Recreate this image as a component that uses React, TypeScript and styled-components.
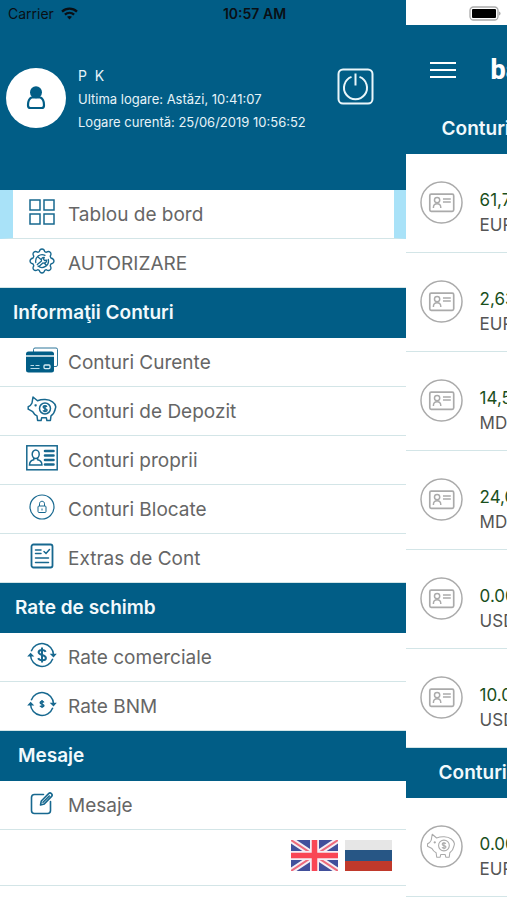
import React from "react";
import styled, { createGlobalStyle, css } from "styled-components";

const blue = "#015d86";
const iconBlue = "#17688f";
const line = "#d3e5e7";

const GlobalStyle = createGlobalStyle`
  *, *::before, *::after { box-sizing: border-box; }
  body { margin: 0; background: #fff; font-family: Inter, "Liberation Sans", sans-serif; }
  button { font: inherit; border: 0; padding: 0; margin: 0; background: none; cursor: pointer; }
  h1, h2, p, ul { margin: 0; padding: 0; }
  ul { list-style: none; }
  svg { display: block; flex: none; }
`;

const Screen = styled.div`
  position: relative;
  display: grid;
  grid-template-columns: 4fr 1fr;
  min-height: 100vh;
  background: #fff;
`;

const StatusBar = styled.div`
  position: absolute;
  inset: 0 0 auto 0;
  z-index: 1;
  display: grid;
  grid-template-columns: 1fr auto 1fr;
  align-items: center;
  height: 27px;
  padding: 0 6px 0 8px;
  font-size: 14px;
  color: #0a0f14;
`;

const Carrier = styled.div`
  display: flex;
  align-items: center;
  gap: 7px;
`;

const Time = styled.time`
  font-weight: 600;
`;

const BatterySlot = styled.div`
  display: flex;
  justify-content: flex-end;
`;

const Drawer = styled.aside`
  min-width: 0;
  background: #fff;
`;

const Profile = styled.header`
  display: flex;
  align-items: center;
  height: 190px;
  padding: 6px 32px 0 6px;
  background: ${blue};
  color: #e6f3f8;
`;

const Avatar = styled.div`
  display: grid;
  place-items: center;
  flex: none;
  width: 60px;
  height: 60px;
  border-radius: 50%;
  background: #fff;
`;

const ProfileText = styled.div`
  flex: 1;
  min-width: 0;
  margin-left: 12px;
  padding-top: 2px;
  white-space: nowrap;
`;

const UserName = styled.p`
  font-size: 14px;
  line-height: 24px;
  white-space: pre;
`;

const LoginInfo = styled.p`
  font-size: 13px;
  line-height: 23px;
`;

const PowerButton = styled.button`
  align-self: center;
  margin-bottom: 24px;
`;

const Section = styled.section``;

const SectionTitle = styled.h2<{ $indent: number }>`
  height: 50px;
  padding-left: ${(p) => p.$indent}px;
  background: ${blue};
  color: #f2f9fc;
  font-size: 19px;
  font-weight: 600;
  line-height: 50px;
  white-space: nowrap;
`;

const MenuButton = styled.button<{ $active?: boolean }>`
  display: flex;
  align-items: center;
  gap: 10px;
  width: 100%;
  height: 49px;
  padding: 0 12px 0 26px;
  border-bottom: 1px solid ${line};
  color: #666;
  font-size: 19px;
  text-align: left;
  ${(p) =>
    p.$active &&
    css`
      padding-left: 13px;
      border-left: 13px solid #a9e2f8;
      border-right: 12px solid #a9e2f8;
    `}
`;

const IconSlot = styled.span`
  display: grid;
  place-items: center;
  width: 32px;
  padding-bottom: 4px;
`;

const Languages = styled.div`
  display: flex;
  justify-content: flex-end;
  align-items: center;
  gap: 7px;
  height: 56px;
  padding: 0 14px 5px 0;
  border-bottom: 1px solid ${line};
`;

const Page = styled.main`
  min-width: 0;
  overflow: hidden;
  padding-top: 25px;
`;

const PageHeader = styled.header`
  display: flex;
  align-items: center;
  gap: 35px;
  height: 79px;
  padding: 10px 0 0 24px;
  background: ${blue};
`;

const Brand = styled.h1`
  color: #fff;
  font-family: Roboto, "Liberation Sans", sans-serif;
  font-size: 27px;
  font-weight: 800;
  line-height: 34px;
`;

const AccountRow = styled.li`
  display: flex;
  align-items: center;
  gap: 17px;
  height: 99px;
  padding: 0 0 2px 14px;
  border-bottom: 1px solid ${line};
`;

const AccountText = styled.div`
  padding-top: 22px;
  font-size: 17px;
  line-height: 25px;
  white-space: nowrap;
`;

const Amount = styled.p`
  color: #1a4f1c;
`;

const Currency = styled.p`
  color: #555;
`;

const Wifi = () => (
  <svg width="17" height="13" viewBox="0 0 17 13" fill="none" stroke="#0a0f14" strokeWidth="2.3" aria-hidden="true">
    <path d="M1 4.6C5.3.6 11.7.6 16 4.6M3.9 7.7c2.7-2.4 6.5-2.4 9.2 0" />
    <path d="M8.5 12.4 6 9.8c1.5-1.2 3.5-1.2 5 0z" fill="#0a0f14" stroke="none" />
  </svg>
);

const Battery = () => (
  <svg width="32" height="15" viewBox="0 0 32 15" aria-hidden="true">
    <rect x="1" y="1" width="28" height="13" rx="3.5" fill="#fff" stroke="#aaa" strokeWidth="1.3" />
    <rect x="3" y="3" width="24" height="9" rx="1" fill="#000" />
    <path d="M30.3 5.5c1.5.6 1.5 3.4 0 4z" fill="#888" />
  </svg>
);

const Person = () => (
  <svg width="20" height="24" viewBox="0 0 20 24" aria-hidden="true">
    <path
      d="M5.5 11.5C2.700 12.800 2 16 2 19.200c0 1.800.8 2.800 2.400 2.800h11.200c1.600 0 2.400-1 2.400-2.800 0-3.200-.7-6.400-3.500-7.700z"
      fill="#fff"
      stroke={blue}
      strokeWidth="2.200"
    />
    <circle cx="10" cy="6.300" r="6" fill={blue} />
  </svg>
);

const Power = () => (
  <svg width="37" height="37" viewBox="0 0 37 37" fill="none" stroke="#eaf6fa" strokeWidth="2" aria-hidden="true">
    <rect x="1.500" y="1.500" width="34" height="34" rx="4.500" />
    <path d="M14.500 8.900a11.500 11.500 0 1 0 8 0M18.500 5.500v12" />
  </svg>
);

const Hamburger = () => (
  <svg width="26" height="18" viewBox="0 0 26 18" stroke="#fff" strokeWidth="2" aria-hidden="true">
    <path d="M0 2h26M0 9h26M0 16h26" />
  </svg>
);

const Grid = () => (
  <svg width="26" height="26" viewBox="0 0 26 26" fill="none" stroke={iconBlue} strokeWidth="1.500" aria-hidden="true">
    <rect x="1" y="1" width="10" height="10" />
    <rect x="15" y="1" width="10" height="10" />
    <rect x="1" y="15" width="10" height="10" />
    <rect x="15" y="15" width="10" height="10" />
  </svg>
);

const Gear = () => (
  <svg width="26" height="26" viewBox="0 0 26 26" fill="none" stroke={iconBlue} strokeWidth="1.300" strokeLinejoin="round" strokeLinecap="round" aria-hidden="true">
    <path d="M10.300 3.600C10.700 1.600 11.600 1 13 1s2.300.6 2.700 2.600l1.600.7c1.800-1.200 2.900-1 3.900 0s1.200 2.100 0 3.900l.7 1.800c2.200.6 3.100 1.400 3.100 3s-.9 2.400-3.100 3l-.7 1.800c1.200 1.800 1 2.900 0 3.900s-2.100 1.200-3.900 0l-1.600.7C15.300 24.400 14.400 25 13 25s-2.300-.6-2.700-2.600l-1.600-.7c-1.800 1.200-2.900 1-3.900 0s-1.200-2.100 0-3.900L4.100 16C1.900 15.400 1 14.600 1 13s.9-2.400 3.100-3l.7-1.800c-1.200-1.800-1-2.900 0-3.900s2.100-1.200 3.900 0z" />
    <path d="M6.800 14.500A6.500 6.500 0 0 1 16 7.300M19.300 11.500A6.500 6.500 0 0 1 9 18.100" />
    <path d="M8.300 16.600l4.200-3.600c-.6-2 .7-3.800 2.800-3.700l-.8 1.900 1.100 1.300 2.100-.3c0 2.200-1.800 3.300-3.800 2.700l-3.700 3.300M9.300 9.300l3 2.500M15.300 15.300l2.300 2.200" />
  </svg>
);

const Cards = () => (
  <svg width="32" height="26" viewBox="0 0 32 26" aria-hidden="true">
    <rect x="7.500" y="1" width="24" height="18.500" rx="1.500" fill="#fff" stroke={iconBlue} strokeWidth=".9" />
    <rect x="0" y="4.500" width="28" height="21" rx="2.500" fill={blue} />
    <path d="M0 9h28" stroke="#fff" strokeWidth="1.400" />
    <path d="M4.500 18.500h3.500M9.500 18.500h4M4.500 21.500h9" stroke="#b9dbe8" strokeWidth="1" />
    <rect x="18" y="18" width="6" height="3.600" rx="1" fill="none" stroke="#d5eaf2" strokeWidth="1.300" />
  </svg>
);

const PiggyShape = () => (
  <>
    <path d="M6 1 10.500 4.800C15 3 21.500 3 25.500 5.800c2 1.400 2.800 2.900 3.200 4.700.1 1-.2 1.800-.5 2.600-.5 3-2 5.200-4.200 6.800l-.6 4.600h-3.500l-.6-2.800h-4.600l-.6 2.800h-3.500l-.6-4.600c-2-1-3.400-2.500-4.300-4.300L1.200 13.200v-2.400C3 10.300 4.200 8.800 5 7z" />
    <circle cx="18" cy="12.500" r="5.500" />
    <path d="M19.900 10.800c-.8-1.500-3.700-1.300-3.700.3 0 1.900 3.900 1.100 3.900 3 0 1.700-3.300 1.700-4.100.2M18 9v7.200" />
    <path d="M7.500 9.300h2.200M8.600 8.200v2.200" />
  </>
);

const Piggy = () => (
  <svg width="30" height="26" viewBox="0 0 30 26" fill="none" stroke={iconBlue} strokeWidth="1.500" strokeLinejoin="round" aria-hidden="true">
    <PiggyShape />
  </svg>
);

const IdCard = () => (
  <svg width="32" height="26" viewBox="0 0 32 26" fill="none" stroke={iconBlue} aria-hidden="true">
    <rect x=".8" y=".8" width="30.400" height="24" strokeWidth="1.500" />
    <path d="M19 6h8.500M19 10.500h8.500M19 15h8.500M19 19.500h8.500" strokeWidth="2.600" strokeLinecap="round" />
    <ellipse cx="9.700" cy="9.300" rx="3.500" ry="4.200" strokeWidth="1.500" />
    <path d="M7.800 13v1.700c-2.800.6-4.300 1.500-4.300 5.300h12.400c0-3.800-1.500-4.700-4.300-5.300V13" strokeWidth="1.500" />
  </svg>
);

const Lock = () => (
  <svg width="26" height="26" viewBox="0 0 26 26" fill="none" stroke={iconBlue} strokeWidth="1.200" aria-hidden="true">
    <circle cx="13" cy="13" r="12" />
    <rect x="9" y="12" width="8" height="6.500" rx="1" strokeWidth="1" />
    <path d="M10.500 12V9.800c0-3.400 5-3.400 5 0V12M13 14.500v2" strokeWidth="1" />
  </svg>
);

const Statement = () => (
  <svg width="24" height="26" viewBox="0 0 24 26" fill="none" stroke={iconBlue} strokeWidth="1.500" strokeLinecap="round" aria-hidden="true">
    <rect x="1.500" y="1.500" width="21" height="23" rx="2" strokeWidth="1.800" />
    <path d="M5.500 7h5.500M5.500 10.500h5.500M5.500 15h13M5.500 19.500h13M14 8.500l2 2 3.500-4" />
  </svg>
);

const Exchange = ({ large }: { large?: boolean }) => (
  <svg width="30" height="26" viewBox="0 0 30 26" fill="none" stroke={iconBlue} strokeWidth="1.500" aria-hidden="true">
    <path d="M4.200 9.200a11.500 11.500 0 0 1 22.300 3.500M25.800 16.800a11.500 11.500 0 0 1-22.300-3.500" />
    <path d="M.2 14.500 3.600 10.800 7.300 14.500zM22.700 11.800l3.800 3.600L29.800 11.800z" fill={iconBlue} stroke="none" />
    {large ? (
      <path d="M18.600 9.800c-1-2.700-7-2.500-7 .5 0 3.300 7.300 2.100 7.300 5.600 0 3-6.500 3.200-7.700.2M15 5.500v15" strokeWidth="2" />
    ) : (
      <path d="M16.800 11.600c-.5-1.400-3.600-1.300-3.600.2 0 1.700 3.700 1 3.700 2.800 0 1.500-3.300 1.500-3.900.1M15 9v8" strokeWidth="1.500" />
    )}
  </svg>
);

const Compose = () => (
  <svg width="24" height="24" viewBox="0 0 24 24" fill="none" stroke={iconBlue} strokeWidth="1.600" strokeLinejoin="round" strokeLinecap="round" aria-hidden="true">
    <path d="M13.500 3.500H4.500a3 3 0 0 0-3 3v13a3 3 0 0 0 3 3h13a3 3 0 0 0 3-3v-9" />
    <path d="M10.500 14l.8-4L18.600 2.600c1.800-1.700 4.700.8 3 2.800l-7.300 7.500zM13 11.300l6.300-6.300" />
  </svg>
);

const AccountBadge = ({ piggy }: { piggy?: boolean }) => (
  <svg width="43" height="43" viewBox="0 0 44 44" fill="none" stroke="#aaa" strokeWidth="1.500" aria-hidden="true">
    <circle cx="22" cy="22" r="21" />
    {piggy ? (
      <g transform="translate(6.500 8.500)" strokeWidth="1.100" strokeLinejoin="round">
        <PiggyShape />
      </g>
    ) : (
      <>
        <rect x="10" y="13.500" width="24.500" height="17.500" rx="1.500" strokeWidth="1.700" />
        <circle cx="17.500" cy="19.500" r="2.700" />
        <path d="M13.700 27.500c0-5.500 7.600-5.500 7.600 0M23.500 18.500h8M23.500 21.500h8" />
      </>
    )}
  </svg>
);

const UkFlag = () => (
  <svg width="47" height="31" viewBox="0 0 47 31" aria-hidden="true">
    <rect width="47" height="31" fill="#414f9b" />
    <path d="M0 0 47 31M47 0 0 31" stroke="#f5eef5" strokeWidth="6" />
    <path d="M0 0 47 31M47 0 0 31" stroke="#ee6a7b" strokeWidth="2" />
    <path d="M23.500 0v31M0 15.500h47" stroke="#f5eef5" strokeWidth="9" />
    <path d="M23.500 0v31M0 15.500h47" stroke="#f94655" strokeWidth="5.500" />
  </svg>
);

const RuFlag = () => (
  <svg width="47" height="31" viewBox="0 0 47 31" aria-hidden="true">
    <rect width="47" height="31" fill="#e6e6e6" />
    <rect y="10" width="47" height="11" fill="#275685" />
    <rect y="21" width="47" height="10" fill="#c0392b" />
  </svg>
);

interface Item {
  label: string;
  icon: React.ReactNode;
  active?: boolean;
}

const topItems: Item[] = [
  { label: "Tablou de bord", icon: <Grid />, active: true },
  { label: "AUTORIZARE", icon: <Gear /> },
];

const sections: { title: string; indent: number; items: Item[] }[] = [
  {
    title: "Informaţii Conturi",
    indent: 13,
    items: [
      { label: "Conturi Curente", icon: <Cards /> },
      { label: "Conturi de Depozit", icon: <Piggy /> },
      { label: "Conturi proprii", icon: <IdCard /> },
      { label: "Conturi Blocate", icon: <Lock /> },
      { label: "Extras de Cont", icon: <Statement /> },
    ],
  },
  {
    title: "Rate de schimb",
    indent: 15,
    items: [
      { label: "Rate comerciale", icon: <Exchange large /> },
      { label: "Rate BNM", icon: <Exchange /> },
    ],
  },
  { title: "Mesaje", indent: 18, items: [{ label: "Mesaje", icon: <Compose /> }] },
];

const accounts = [
  ["61,7", "EUR"],
  ["2,63", "EUR"],
  ["14,5", "MDL"],
  ["24,0", "MDL"],
  ["0.00", "USD"],
  ["10.0", "USD"],
];

const Menu = ({ items }: { items: Item[] }) => (
  <ul>
    {items.map((item) => (
      <li key={item.label}>
        <MenuButton type="button" $active={item.active}>
          <IconSlot>{item.icon}</IconSlot>
          {item.label}
        </MenuButton>
      </li>
    ))}
  </ul>
);

const Account = ({ amount, currency, piggy }: { amount: string; currency: string; piggy?: boolean }) => (
  <AccountRow>
    <AccountBadge piggy={piggy} />
    <AccountText>
      <Amount>{amount}</Amount>
      <Currency>{currency}</Currency>
    </AccountText>
  </AccountRow>
);

export default function App() {
  return (
    <>
      <GlobalStyle />
      <Screen>
        <StatusBar>
          <Carrier>
            Carrier
            <Wifi />
          </Carrier>
          <Time>10:57 AM</Time>
          <BatterySlot>
            <Battery />
          </BatterySlot>
        </StatusBar>
        <Drawer>
          <Profile>
            <Avatar>
              <Person />
            </Avatar>
            <ProfileText>
              <UserName>{"P  K"}</UserName>
              <LoginInfo>Ultima logare: Astăzi, 10:41:07</LoginInfo>
              <LoginInfo>Logare curentă: 25/06/2019 10:56:52</LoginInfo>
            </ProfileText>
            <PowerButton type="button" aria-label="Deconectare">
              <Power />
            </PowerButton>
          </Profile>
          <nav>
            <Menu items={topItems} />
            {sections.map((s) => (
              <Section key={s.title}>
                <SectionTitle $indent={s.indent}>{s.title}</SectionTitle>
                <Menu items={s.items} />
              </Section>
            ))}
          </nav>
          <Languages>
            <button type="button" aria-label="English">
              <UkFlag />
            </button>
            <button type="button" aria-label="Русский">
              <RuFlag />
            </button>
          </Languages>
        </Drawer>
        <Page>
          <PageHeader>
            <button type="button" aria-label="Meniu">
              <Hamburger />
            </button>
            <Brand>ba</Brand>
          </PageHeader>
          <SectionTitle $indent={36}>Conturi</SectionTitle>
          <ul>
            {accounts.map(([amount, currency], i) => (
              <Account key={i} amount={amount} currency={currency} />
            ))}
          </ul>
          <SectionTitle $indent={33}>Conturi</SectionTitle>
          <ul>
            <Account amount="0.00" currency="EUR" piggy />
          </ul>
        </Page>
      </Screen>
    </>
  );
}
